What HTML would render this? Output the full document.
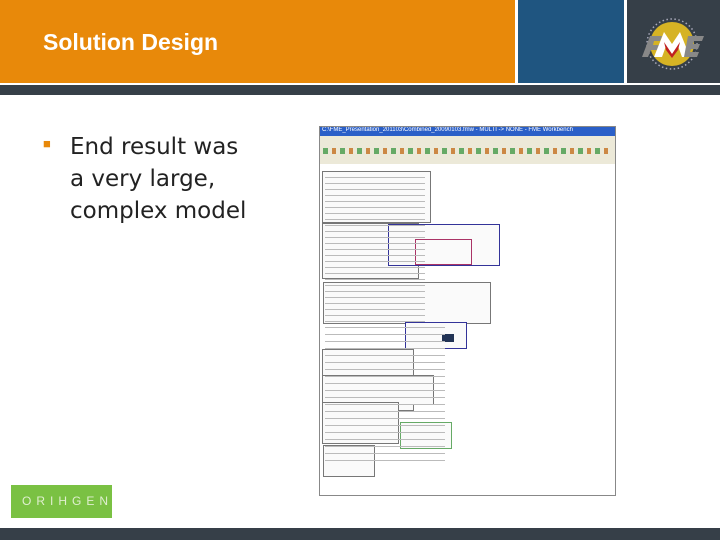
<!DOCTYPE html>
<html><head><style>
body{margin:0;width:720px;height:540px;position:relative;overflow:hidden;background:#fff;font-family:"Liberation Sans",sans-serif}
div{position:absolute}
.b{border:1px solid #777;background:#fafafa}
</style></head><body>
<div style="left:0;top:0;width:515px;height:83px;background:#e8890a"></div>
<div style="left:518px;top:0;width:106px;height:83px;background:#1f5580"></div>
<div style="left:627px;top:0;width:93px;height:83px;background:#363f48"></div>
<div style="left:0;top:85px;width:720px;height:10px;background:#363f48"></div>
<div style="left:43px;top:29px;color:#fff;font-weight:bold;font-size:23px">Solution Design</div>
<svg style="position:absolute;left:632px;top:14px" width="80" height="60" viewBox="0 0 80 60">
<circle cx="40" cy="30" r="22" fill="#e8c020" opacity=".9"/>
<circle cx="40" cy="30" r="25" fill="none" stroke="#aab" stroke-width="1.5" stroke-dasharray="1.5 2.5"/>
<polygon points="10,43 18,22 30,22 28,27 22,27 21,31 27,31 25,36 19,36 16,43" fill="#888"/>
<polygon points="22,43 32,18 40,30 48,18 58,43 50,43 46,32 40,40 34,32 30,43" fill="#fff"/>
<polygon points="32,28 40,40 48,28 46,36 40,44 34,36" fill="#c02020"/>
<polygon points="56,22 72,22 70,27 62,27 61,30 68,30 66,35 59,35 58,38 67,38 65,43 52,43" fill="#888"/>
</svg>
<div style="left:43px;top:136px;color:#e8890a;font-size:13px">&#9632;</div>
<div style="left:70px;top:131px;line-height:32px;color:#222;font-family:'DejaVu Sans',sans-serif;font-size:23px">End result was<br>a very large,<br>complex model</div>
<div style="left:319px;top:126px;width:297px;height:370px;background:#fff;border:1px solid #888;box-sizing:border-box;overflow:hidden">
<div style="left:0;top:0;width:295px;height:9px;background:#2a5fc8"></div>
<div style="left:2px;top:0;font-size:6px;color:#fff;white-space:nowrap">C:\FME_Presentation_201103\Combined_20090103.fmw - MULTI -&gt; NONE - FME Workbench</div>
<div style="left:0;top:9px;width:295px;height:28px;background:#ece9d8"></div>
<div style="left:3px;top:21px;width:288px;height:6px;background:repeating-linear-gradient(90deg,#6a6 0 5px,#ece9d8 5px 9px,#c84 9px 13px,#ece9d8 13px 17px)"></div>
<div style="left:0;top:37px;width:295px;height:331px;background:#fff"></div>
<div class="b" style="left:2px;top:44px;width:107px;height:50px"></div>
<div class="b" style="left:2px;top:96px;width:95px;height:54px"></div>
<div class="b" style="left:68px;top:97px;width:110px;height:40px;border-color:#339"></div>
<div class="b" style="left:95px;top:112px;width:55px;height:24px;border-color:#a36"></div>
<div class="b" style="left:3px;top:155px;width:166px;height:40px"></div>
<div class="b" style="left:85px;top:195px;width:60px;height:25px;border-color:#339"></div>
<div class="b" style="left:2px;top:222px;width:90px;height:60px"></div>
<div class="b" style="left:2px;top:248px;width:110px;height:28px"></div>
<div class="b" style="left:2px;top:275px;width:75px;height:40px"></div>
<div class="b" style="left:80px;top:295px;width:50px;height:25px;border-color:#6a6"></div>
<div class="b" style="left:3px;top:318px;width:50px;height:30px"></div>
<div style="left:122px;top:207px;width:12px;height:8px;background:#235"></div>
<div style="left:5px;top:50px;width:100px;height:150px;background:repeating-linear-gradient(0deg,transparent 0 5px,#bbb 5px 6px)"></div>
<div style="left:5px;top:200px;width:120px;height:140px;background:repeating-linear-gradient(0deg,transparent 0 6px,#bbb 6px 7px)"></div>
</div>
<div style="left:11px;top:485px;width:101px;height:33px;background:#7ac143"></div>
<div style="left:22px;top:494px;color:#e0efd0;font-size:12px;letter-spacing:5px">ORIHGEN</div>
<div style="left:0;top:528px;width:720px;height:12px;background:#363f48"></div>
</body></html>
